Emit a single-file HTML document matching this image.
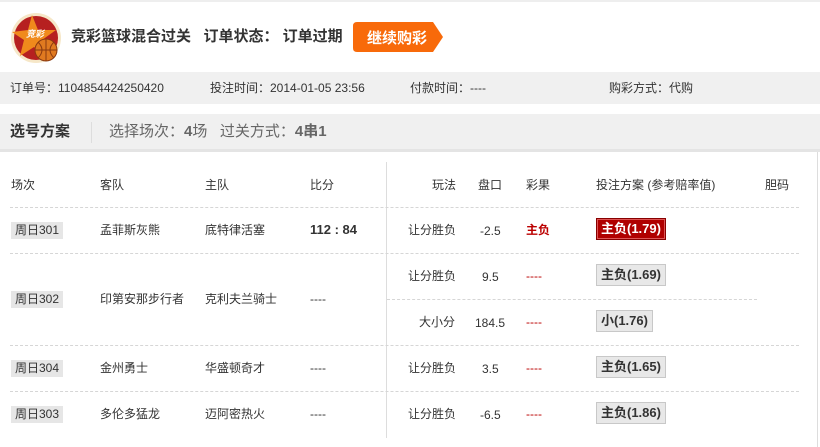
<!DOCTYPE html>
<html><head><meta charset="utf-8"><style>
*{margin:0;padding:0;box-sizing:border-box}
body{width:820px;height:447px;overflow:hidden;background:#fff;font-family:"Liberation Sans","Noto Sans CJK SC",sans-serif;font-size:12px;color:#333;position:relative}
.a{position:absolute;white-space:nowrap;line-height:16px}
.hd{height:1px;border-top:1px dashed #d6d6d6;position:absolute}
.tag{position:absolute;background:#e6e6e6;color:#333;height:17px;line-height:17px;padding:0 4px;font-size:12px}
.btn{position:absolute;background:#e8e8e8;border:1px solid #c8c8c8;height:22px;line-height:20px;padding:0 4px;font-weight:bold;font-size:13px;color:#333}
.red{background:#b00000;border:1px solid #800;color:#fff;box-shadow:inset 0 0 0 1px #d55}
</style></head><body>
<div class="a" style="left:0;top:0;width:820px;height:2px;background:#eee"></div>
<svg class="a" style="left:10px;top:12px" width="52" height="52" viewBox="0 0 52 52">
<circle cx="26" cy="26" r="25" fill="#f6e7c8"/><circle cx="26" cy="26" r="22" fill="#b62020"/>
<polygon points="22,3 28,18 46,18 32,28 38,46 24,35 10,44 14,28 2,20 18,18" fill="#f08a1c"/>
<circle cx="36" cy="38" r="11" fill="#e07a20" stroke="#8a3a10" stroke-width="1"/>
<path d="M25 38h22M36 27v22M28 30q8 8 0 16M44 30q-8 8 0 16" stroke="#8a3a10" fill="none" stroke-width="1"/>
<text x="16" y="25" font-size="9" fill="#fff" font-style="italic" font-weight="bold" font-family="Noto Sans CJK SC">竞彩</text>
</svg>
<div class="a" style="left:71px;top:29px;font-size:15px;font-weight:bold;color:#333">竞彩篮球混合过关&nbsp;&nbsp;&nbsp;订单状态：&nbsp;订单过期</div>
<svg class="a" style="left:353px;top:22px" width="91" height="30"><path d="M4 0H80L90 15L80 30H4Q0 30 0 26V4Q0 0 4 0Z" fill="#f86a0a"/><text x="14" y="21" font-size="15" font-weight="bold" fill="#fff" font-family="Noto Sans CJK SC">继续购彩</text></svg>
<div class="a" style="left:0;top:72px;width:820px;height:32px;background:#f0f0f0"></div>
<div class="a" style="left:10px;top:80px">订单号：1104854424250420</div>
<div class="a" style="left:210px;top:80px">投注时间：2014-01-05 23:56</div>
<div class="a" style="left:410px;top:80px">付款时间：----</div>
<div class="a" style="left:609px;top:80px">购彩方式：代购</div>
<div class="a" style="left:0;top:114px;width:820px;height:36px;background:#f0f0f0"></div>
<div class="a" style="left:0;top:149px;width:820px;height:3px;background:#e4e4e4"></div>
<div class="a" style="left:91px;top:122px;width:1px;height:21px;background:#ddd"></div>
<div class="a" style="left:10px;top:124px;font-size:15px;font-weight:bold">选号方案</div>
<div class="a" style="left:109px;top:124px;font-size:15px;color:#666">选择场次：<b>4</b>场&nbsp;&nbsp;&nbsp;过关方式：<b>4串1</b></div>
<div class="a" style="left:817px;top:152px;width:1px;height:295px;background:#ddd"></div>
<div class="a" style="left:386px;top:162px;width:1px;height:276px;background:#ddd"></div>
<div class="a" style="left:11px;top:177px">场次</div><div class="a" style="left:100px;top:177px">客队</div><div class="a" style="left:205px;top:177px">主队</div><div class="a" style="left:310px;top:177px">比分</div>
<div class="a" style="left:432px;top:177px">玩法</div><div class="a" style="left:478px;top:177px">盘口</div><div class="a" style="left:526px;top:177px">彩果</div><div class="a" style="left:596px;top:177px">投注方案 (参考赔率值)</div><div class="a" style="left:765px;top:177px">胆码</div>
<div class="hd" style="left:10px;top:207px;width:789px"></div>
<div class="hd" style="left:10px;top:253px;width:789px"></div>
<div class="hd" style="left:387px;top:299px;width:370px"></div>
<div class="hd" style="left:10px;top:345px;width:789px"></div>
<div class="hd" style="left:10px;top:391px;width:789px"></div>
<div class="tag" style="left:11px;top:222px">周日301</div>
<div class="a" style="left:100px;top:222px">孟菲斯灰熊</div><div class="a" style="left:205px;top:222px">底特律活塞</div><div class="a" style="left:310px;top:222px;font-weight:bold;font-size:13px">112 : 84</div>
<div class="a" style="left:408px;top:222px">让分胜负</div><div class="a" style="left:480px;top:223px">-2.5</div><div class="a" style="left:526px;top:222px;color:#b00;font-weight:bold">主负</div>
<div class="btn red" style="left:596px;top:218px">主负(1.79)</div>
<div class="tag" style="left:11px;top:291px">周日302</div>
<div class="a" style="left:100px;top:291px">印第安那步行者</div><div class="a" style="left:205px;top:291px">克利夫兰骑士</div><div class="a" style="left:310px;top:291px">----</div>
<div class="a" style="left:408px;top:268px">让分胜负</div><div class="a" style="left:482px;top:269px">9.5</div><div class="a" style="left:526px;top:268px;color:#b00">----</div>
<div class="btn" style="left:596px;top:264px">主负(1.69)</div>
<div class="a" style="left:419px;top:314px">大小分</div><div class="a" style="left:475px;top:315px">184.5</div><div class="a" style="left:526px;top:314px;color:#b00">----</div>
<div class="btn" style="left:596px;top:310px">小(1.76)</div>
<div class="tag" style="left:11px;top:360px">周日304</div>
<div class="a" style="left:100px;top:360px">金州勇士</div><div class="a" style="left:205px;top:360px">华盛顿奇才</div><div class="a" style="left:310px;top:360px">----</div>
<div class="a" style="left:408px;top:360px">让分胜负</div><div class="a" style="left:482px;top:361px">3.5</div><div class="a" style="left:526px;top:360px;color:#b00">----</div>
<div class="btn" style="left:596px;top:356px">主负(1.65)</div>
<div class="tag" style="left:11px;top:406px">周日303</div>
<div class="a" style="left:100px;top:406px">多伦多猛龙</div><div class="a" style="left:205px;top:406px">迈阿密热火</div><div class="a" style="left:310px;top:406px">----</div>
<div class="a" style="left:408px;top:406px">让分胜负</div><div class="a" style="left:480px;top:407px">-6.5</div><div class="a" style="left:526px;top:406px;color:#b00">----</div>
<div class="btn" style="left:596px;top:402px">主负(1.86)</div>
</body></html>
